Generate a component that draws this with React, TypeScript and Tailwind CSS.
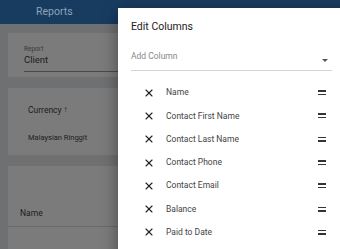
import { X } from "lucide-react";

const columns = [
  "Name",
  "Contact First Name",
  "Contact Last Name",
  "Contact Phone",
  "Contact Email",
  "Balance",
  "Paid to Date",
];

export default function App() {
  return (
    <div
      className="relative w-[340px] h-[249px] overflow-hidden bg-[#6f7071]"
      style={{ fontFamily: "Roboto, 'Liberation Sans', sans-serif" }}
    >
      {/* page behind the dialog (dimmed) */}
      <div className="h-[24px] bg-[#183c60] flex items-center pl-[36px] text-[10.5px] text-[#8ca3bb]">
        Reports
      </div>

      <div className="ml-[8px] mt-[9px] h-[44px] bg-[#7b7b7b] pl-[16px] pt-[12px]">
        <div className="text-[6.5px] leading-[9px] text-[#3a3a3a]">Report</div>
        <div className="text-[9.5px] leading-[12px] text-[#1c1c1c]">Client</div>
        <div className="mt-[5px] h-px bg-[#4a4a4a]" />
      </div>

      <div className="ml-[8px] mt-[11px] h-[67px] bg-[#7b7b7b] pl-[20px] pt-[16px] text-[8.5px] text-[#1c1c1c]">
        <div className="flex items-center gap-[2px]">
          Currency <span className="text-[8px] font-bold">↑</span>
        </div>
        <div className="mt-[15px] text-[7.5px]">Malaysian Ringgit</div>
      </div>

      <div className="ml-[8px] mt-[11px] h-[90px] bg-[#7b7b7b] pt-[41px] text-[8.5px] text-[#1c1c1c]">
        <div className="pl-[12px] h-[19px]">Name</div>
        <div className="h-px bg-[#6a6a6a]" />
      </div>

      {/* dialog */}
      <div className="absolute left-[118px] top-[8px] w-[240px] h-[260px] bg-white shadow-[0_4px_16px_rgba(0,0,0,0.4)] pl-[13px] pr-[8px]">
        <div className="pt-[11px] text-[10.5px] leading-[16px] text-[#222]">Edit Columns</div>

        <div className="mt-[15px] w-[201px] h-[21px] border-b border-[#d5d5d5] relative">
          <div className="text-[8.5px] leading-[12px] text-[#888]">Add Column</div>
          <svg className="absolute right-[4px] top-[9px]" width="6" height="3" viewBox="0 0 6 3">
            <path d="M0 0 L6 0 L3 3 Z" fill="#555" />
          </svg>
        </div>

        <div className="mt-[10px] flex flex-col w-[201px]">
          {columns.map((c) => (
            <div key={c} className="h-[23.3px] flex items-center">
              <div className="w-[35px] flex justify-center">
                <X size={12} strokeWidth={2.2} color="#222" />
              </div>
              <div className="flex-1 text-[8.5px] text-[#444]">{c}</div>
              <div className="flex flex-col gap-[2px] mr-[6px]">
                <div className="w-[8px] h-[1.5px] bg-[#333]" />
                <div className="w-[8px] h-[1.5px] bg-[#333]" />
              </div>
            </div>
          ))}
        </div>
      </div>
    </div>
  );
}
